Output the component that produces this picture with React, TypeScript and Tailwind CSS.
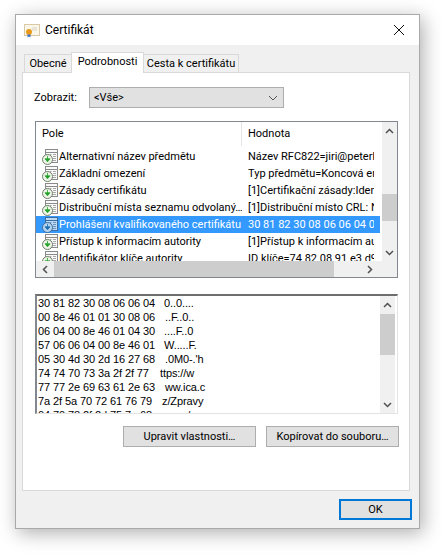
const fields: [string, string][] = [
  ["Alternativní název předmětu", "Název RFC822=jiri@peterka.cz"],
  ["Základní omezení", "Typ předmětu=Koncová entita"],
  ["Zásady certifikátu", "[1]Certifikační zásady:Identifikátor"],
  ["Distribuční místa seznamu odvolaný…", "[1]Distribuční místo CRL: Název"],
  ["Prohlášení kvalifikovaného certifikátu", "30 81 82 30 08 06 06 04 00 8e 46"],
  ["Přístup k informacím autority", "[1]Přístup k informacím autority"],
  ["Identifikátor klíče autority", "ID klíče=74 82 08 91 e3 d9 1a"],
];

const hexRows: [string, string, string][] = [
  ["30 81 82 30 08 06 06 04", "0..0....", "pl-[8px]"],
  ["00 8e 46 01 01 30 08 06", "..F..0..", "pl-[9px]"],
  ["06 04 00 8e 46 01 04 30", "....F..0", "pl-[8px]"],
  ["57 06 06 04 00 8e 46 01", "W.....F.", "pl-[8px]"],
  ["05 30 4d 30 2d 16 27 68", ".0M0-.'h", "pl-[9px]"],
  ["74 74 70 73 3a 2f 2f 77", "ttps://w", "pl-[4px]"],
  ["77 77 2e 69 63 61 2e 63", "ww.ica.c", "pl-[9px]"],
  ["7a 2f 5a 70 72 61 76 79", "z/Zpravy", "pl-[6px]"],
  ["04 70 78 2f 2d 75 7a 68", "...p.x/-", "pl-[8px]"],
];

function FieldIcon({ selected }: { selected?: boolean }) {
  return (
    <svg width="16" height="16" viewBox="0 0 16 16" className="shrink-0">
      <rect x="3.5" y="0.5" width="12" height="13" fill={selected ? "#bcd9f5" : "#fafafa"} stroke={selected ? "#3d6d9c" : "#8a8a8a"} />
      <path d="M3.5 3.5h12" stroke={selected ? "#3d6d9c" : "#8a8a8a"} />
      <path d="M8 5.5h1.5M11 5.5h3M8 7.5h1.5M11 7.5h3M8 9.5h1.5M11 9.5h3M9.500 11.500h4.500" stroke={selected ? "#6d94bd" : "#a8a8a8"} />
      <circle cx="5.500" cy="10.500" r="5" fill={selected ? "#b6d4ef" : "#eef5e8"} stroke={selected ? "#3d6d9c" : "#6f7f68"} />
      <path d="M5.500 6.800v5M3 9.800l2.500 3 2.500-3z" fill={selected ? "#1d6fb3" : "#25a22a"} stroke={selected ? "#1d6fb3" : "#25a22a"} strokeWidth="0.8" />
    </svg>
  );
}

function ChevUp() {
  return (
    <svg width="9" height="6" viewBox="0 0 9 6">
      <path d="M1 5l3.500-3.500L8 5" fill="none" stroke="#505050" strokeWidth="1.500" />
    </svg>
  );
}
function ChevDown() {
  return (
    <svg width="9" height="6" viewBox="0 0 9 6">
      <path d="M1 1l3.500 3.500L8 1" fill="none" stroke="#505050" strokeWidth="1.500" />
    </svg>
  );
}

function VScroll({ thumbTop, thumbH }: { thumbTop: string; thumbH: string }) {
  return (
    <div className="w-[15px] h-full bg-[#f0f0f0] flex flex-col items-center shrink-0">
      <div className="h-[17px] w-full flex items-center justify-center shrink-0"><ChevUp /></div>
      <div className={`${thumbTop} ${thumbH} w-full bg-[#cdcdcd] shrink-0`} />
      <div className="flex-1" />
      <div className="h-[17px] w-full flex items-center justify-center shrink-0"><ChevDown /></div>
    </div>
  );
}

export default function App() {
  return (
    <div className="w-[442px] h-[554px] bg-white overflow-hidden pl-[15px] pt-[14px] font-['Roboto',sans-serif] text-[11px] leading-[16px] text-black">
      <div className="w-[405px] h-[515px] border border-[#a9a9a9] bg-[#f0f0f0] shadow-[3px_4px_18px_rgba(0,0,0,0.32)] flex flex-col">
        {/* Title bar */}
        <div className="h-[30px] bg-white flex items-center shrink-0 pl-[8px] pr-[9px]">
          <svg width="16" height="16" viewBox="0 0 16 16" className="shrink-0">
            <rect x="0.500" y="2.500" width="15" height="11" fill="#fbf6ea" stroke="#d9c9a5" />
            <path d="M8 6h5M8 8h5" stroke="#d8d2c4" />
            <circle cx="5" cy="10" r="3" fill="#e89a1c" />
            <path d="M3.500 12.500v3l1.500-1 1.500 1v-3z" fill="#3c6fc7" />
          </svg>
          <span className="ml-[5px] text-[12px]">Certifikát</span>
          <svg width="12" height="12" viewBox="0 0 12 12" className="ml-auto mr-[5px]">
            <path d="M1 1l10 10M11 1L1 11" stroke="#111" strokeWidth="1" />
          </svg>
        </div>

        {/* Tabs */}
        <div className="h-[27px] flex items-end pl-[8px] shrink-0 relative z-10 whitespace-nowrap">
          <div className="h-[18px] w-[48px] border border-b-0 border-[#d9d9d9] bg-[#f0f0f0] flex items-center justify-center">Obecné</div>
          <div className="h-[21px] w-[73px] border border-b-0 border-[#d9d9d9] bg-white flex items-center justify-center -mb-[1px] -mx-px relative z-10 pb-[3px]">Podrobnosti</div>
          <div className="h-[18px] w-[96px] border border-b-0 border-[#d9d9d9] bg-[#f0f0f0] flex items-center justify-center">Cesta k certifikátu</div>
        </div>

        {/* Panel */}
        <div className="mx-[6px] w-[388px] h-[419px] border border-[#d9d9d9] bg-white shrink-0 pl-[12px] flex flex-col">
          <div className="flex items-center h-[21px] mt-[14px] shrink-0">
            <span className="w-[55px] -ml-px shrink-0 whitespace-nowrap">Zobrazit:</span>
            <div className="w-[195px] h-[21px] border border-[#adadad] bg-[#e1e1e1] flex items-center pl-[4px] pr-[5px]">
              <span>&lt;Vše&gt;</span>
              <svg width="10" height="6" viewBox="0 0 10 6" className="ml-auto">
                <path d="M1 1l4 4 4-4" fill="none" stroke="#555" />
              </svg>
            </div>
          </div>

          {/* Field list */}
          <div className="mt-[13px] w-[363px] h-[157px] border border-[#828790] bg-white flex flex-col shrink-0">
            <div className="flex flex-1 min-h-0">
              <div className="w-[344px] flex flex-col min-w-0">
                <div className="h-[24px] flex items-center shrink-0">
                  <div className="w-[206px] pl-[6px] h-full flex items-center border-r border-[#e5e5e5]">Pole</div>
                  <div className="pl-[6px]">Hodnota</div>
                </div>
                <div className="flex-1 overflow-hidden pt-[2px]">
                  {fields.map(([name, value], i) => (
                    <div key={name} className={`flex h-[17px] items-center ${i === 4 ? "bg-[#3399ff] text-white" : ""}`}>
                      <div className="w-[206px] flex items-center pl-[6px] overflow-hidden whitespace-nowrap shrink-0">
                        <FieldIcon selected={i === 4} />
                        <span className="ml-px">{name}</span>
                      </div>
                      <div className="pl-[6px] w-[132px] overflow-hidden whitespace-nowrap">{value}</div>
                    </div>
                  ))}
                </div>
              </div>
              <div className="w-[2px] shrink-0" />
              <VScroll thumbTop="mt-[55px]" thumbH="h-[27px]" />
            </div>
            <div className="h-[16px] flex shrink-0 bg-[#f0f0f0] items-center">
              <div className="w-[18px] flex items-center justify-center shrink-0">
                <svg width="6" height="9" viewBox="0 0 6 9"><path d="M5 1L1.500 4.500 5 8" fill="none" stroke="#505050" strokeWidth="1.500" /></svg>
              </div>
              <div className="w-[280px] h-full bg-[#cdcdcd] shrink-0" />
              <div className="flex-1 flex justify-end pr-[24px]">
                <svg width="6" height="9" viewBox="0 0 6 9"><path d="M1 1l3.500 3.500L1 8" fill="none" stroke="#505050" strokeWidth="1.500" /></svg>
              </div>
            </div>
          </div>

          {/* Hex box */}
          <div className="mt-[16px] w-[363px] h-[120px] border-t-2 border-l-2 border-r border-b border-t-[#6e6e6e] border-l-[#828790] border-r-[#e3e3e3] border-b-[#e3e3e3] bg-white flex shrink-0">
            <div className="flex-1 overflow-hidden pl-px font-['Liberation_Sans',sans-serif] text-[11px] tracking-[-0.1px] leading-[14px]">
              {hexRows.map(([hex, ascii, pad]) => (
                <div key={hex} className="flex whitespace-nowrap h-[14px]">
                  <span className="w-[118px] shrink-0">{hex}</span>
                  <span className={pad}>{ascii}</span>
                </div>
              ))}
            </div>
            <VScroll thumbTop="mt-px" thumbH="h-[41px]" />
            <div className="w-[2px] shrink-0" />
          </div>

          {/* Buttons */}
          <div className="flex mt-[12px] ml-[88px] gap-[10px] shrink-0">
            <div className="w-[133px] h-[21px] border border-[#adadad] bg-[#e1e1e1] flex items-center justify-center">Upravit vlastnosti…</div>
            <div className="w-[133px] h-[21px] border border-[#adadad] bg-[#e1e1e1] flex items-center justify-center">Kopírovat do souboru…</div>
          </div>
        </div>

        {/* Footer */}
        <div className="flex justify-end pr-[7px] pt-[8px]">
          <div className="w-[73px] h-[21px] border-2 border-[#0078d7] bg-[#e1e1e1] flex items-center justify-center">OK</div>
        </div>
      </div>
    </div>
  );
}
